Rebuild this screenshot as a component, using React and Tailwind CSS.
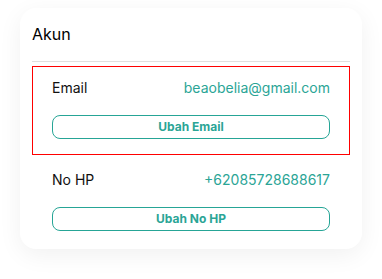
import React from 'react';

const rows = [
  { label: 'Email', value: 'beaobelia@gmail.com', action: 'Ubah Email', active: true },
  { label: 'No HP', value: '+62085728688617', action: 'Ubah No HP', active: false },
];

const App = () => {
  return (
    <div className="min-h-screen bg-white pt-[8px] pl-[20px]" style={{ fontFamily: 'Inter, "Noto Sans", sans-serif' }}>
      <div className="w-[342px] rounded-2xl bg-white px-3 pb-[17px] shadow-[0_6px_24px_rgba(0,0,0,0.06)]">
        <h2 className="pt-[14px] pb-[15px] text-base leading-6 text-black">Akun</h2>
        <div className="h-px bg-[#e0e0e0]" />

        <div className="mt-[4px]">
          {rows.map((row) => (
            <div
              key={row.label}
              className={`border px-[19px] ${row.active ? 'border-[#ff0000] pt-[8px] pb-[15px]' : 'border-transparent pt-[11px] pb-0'}`}
            >
              <div className="flex h-6 items-center justify-between text-[14px]">
                <span className="text-[#111]">{row.label}</span>
                <span className="text-[#2ba596]">{row.value}</span>
              </div>
              <button className="mt-4 flex h-[24px] w-full items-center justify-center rounded-lg border border-[#26a596] text-[12px] font-bold text-[#2ba596]">
                {row.action}
              </button>
            </div>
          ))}
        </div>
      </div>
    </div>
  );
};

export default App;
